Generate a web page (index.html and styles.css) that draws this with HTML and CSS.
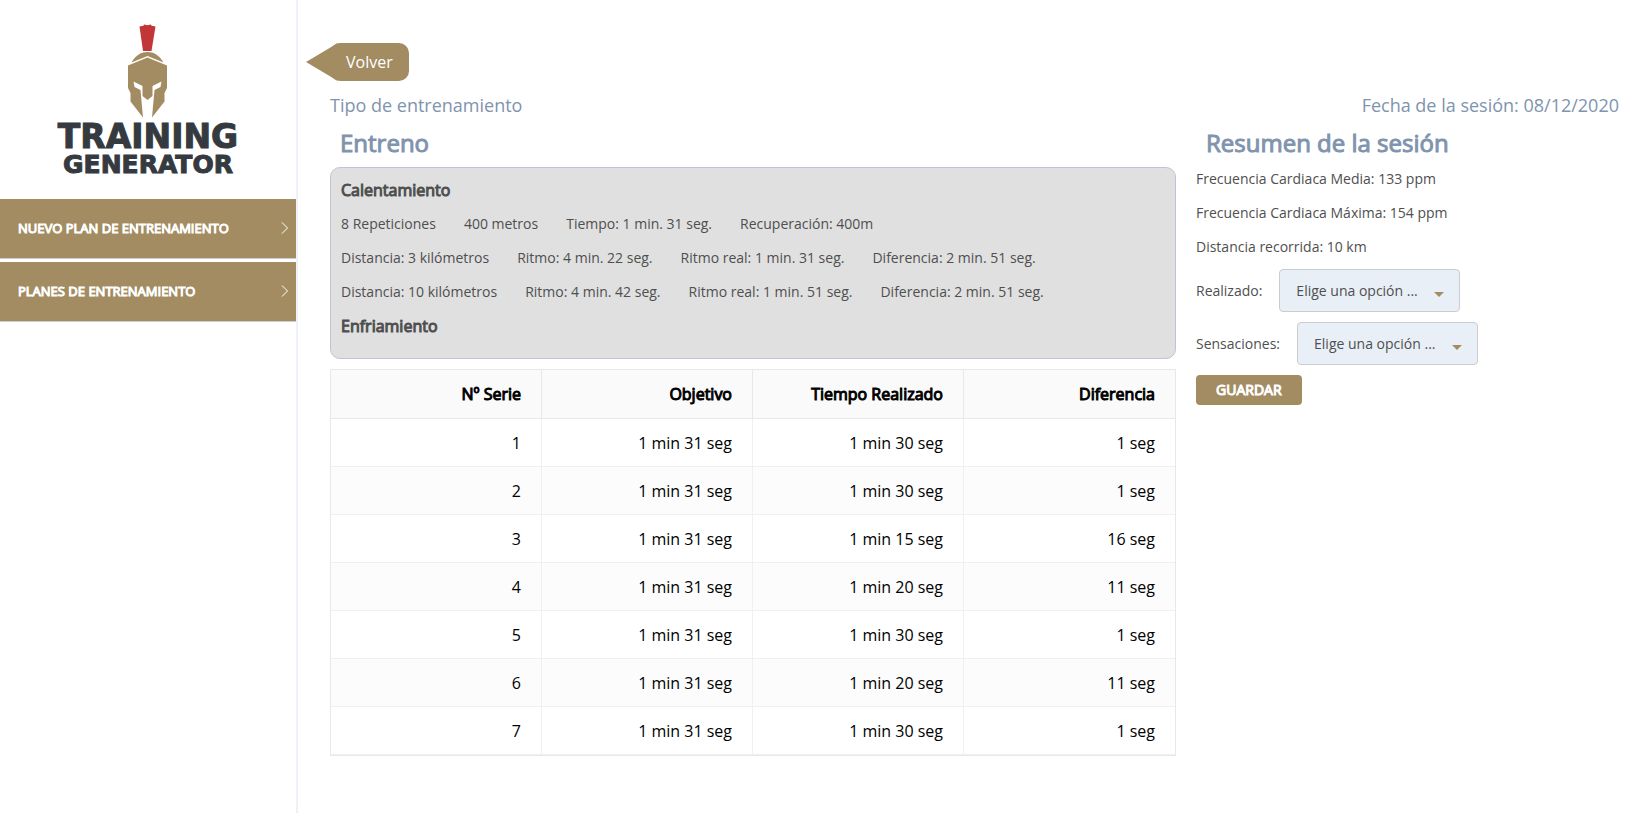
FILE: index.html
```html
<!DOCTYPE html>
<html lang="es">
<head>
<meta charset="utf-8">
<title>Training Generator</title>
<link rel="stylesheet" href="styles.css">
</head>
<body>
<div class="layout">
  <aside class="sidebar">
    <svg class="logo" viewBox="0 0 190 160" role="img" aria-label="Training Generator">
      <path fill="#c23637" d="M87 27 83.500 2.500 87.500 1.800 88 .5 91.500 1.200 95 .5 95.500 1.800 99.500 2.500 95.500 27z"/>
      <path fill="#a38c62" d="M75.500 38.500C79.500 31 85.500 28 91.500 28s12 3 16 10.500L91.500 32z"/>
      <path fill="#a38c62" d="M91.500 33.500 111 41.500V64L108.500 69v8.500L96 93.500 98.500 66 104.500 63 105.500 57.500 96.500 62V72L91.500 76 86.500 72V62L77.500 57.500 78.500 63 84.500 66 87 93.500 74.500 77.500V69L72 64V41.500z"/>
      <text class="logo-top" x="92" y="124" text-anchor="middle">TRAINING</text>
      <text class="logo-bottom" x="92" y="149" text-anchor="middle">GENERATOR</text>
    </svg>
    <nav class="menu">
      <a class="menu-item" href="#">Nuevo plan de entrenamiento
        <svg class="chevron" viewBox="0 0 8 12"><path d="M1 .5 6.500 6 1 11.500"/></svg></a>
      <a class="menu-item" href="#">Planes de entrenamiento
        <svg class="chevron" viewBox="0 0 8 12"><path d="M1 .5 6.500 6 1 11.500"/></svg></a>
    </nav>
  </aside>
  <main class="main">
    <button class="back" type="button">Volver</button>
    <header class="meta"><span>Tipo de entrenamiento</span><span>Fecha de la sesión: 08/12/2020</span></header>
    <div class="columns">
      <section class="training">
        <h2 class="title">Entreno</h2>
        <div class="panel">
          <h3 class="phase">Calentamiento</h3>
          <p class="line"><span>8 Repeticiones</span><span>400 metros</span><span>Tiempo: 1 min. 31 seg.</span><span>Recuperación: 400m</span></p>
          <p class="line"><span>Distancia: 3 kilómetros</span><span>Ritmo: 4 min. 22 seg.</span><span>Ritmo real: 1 min. 31 seg.</span><span>Diferencia: 2 min. 51 seg.</span></p>
          <p class="line"><span>Distancia: 10 kilómetros</span><span>Ritmo: 4 min. 42 seg.</span><span>Ritmo real: 1 min. 51 seg.</span><span>Diferencia: 2 min. 51 seg.</span></p>
          <h3 class="phase">Enfriamiento</h3>
        </div>
        <table class="series">
          <thead><tr><th>Nº Serie</th><th>Objetivo</th><th>Tiempo Realizado</th><th>Diferencia</th></tr></thead>
          <tbody>
            <tr><td>1</td><td>1 min 31 seg</td><td>1 min 30 seg</td><td>1 seg</td></tr>
            <tr><td>2</td><td>1 min 31 seg</td><td>1 min 30 seg</td><td>1 seg</td></tr>
            <tr><td>3</td><td>1 min 31 seg</td><td>1 min 15 seg</td><td>16 seg</td></tr>
            <tr><td>4</td><td>1 min 31 seg</td><td>1 min 20 seg</td><td>11 seg</td></tr>
            <tr><td>5</td><td>1 min 31 seg</td><td>1 min 30 seg</td><td>1 seg</td></tr>
            <tr><td>6</td><td>1 min 31 seg</td><td>1 min 20 seg</td><td>11 seg</td></tr>
            <tr><td>7</td><td>1 min 31 seg</td><td>1 min 30 seg</td><td>1 seg</td></tr>
          </tbody>
        </table>
      </section>
      <section class="summary">
        <h2 class="title">Resumen de la sesión</h2>
        <p class="line">Frecuencia Cardiaca Media: 133 ppm</p>
        <p class="line">Frecuencia Cardiaca Máxima: 154 ppm</p>
        <p class="line">Distancia recorrida: 10 km</p>
        <form class="form">
          <div class="field"><label for="done">Realizado:</label>
            <select class="select" id="done"><option>Elige una opción ...</option></select></div>
          <div class="field"><label for="feel">Sensaciones:</label>
            <select class="select" id="feel"><option>Elige una opción ...</option></select></div>
          <button class="save" type="button">Guardar</button>
        </form>
      </section>
    </div>
  </main>
</div>
</body>
</html>
```
FILE: styles.css
```css
* { box-sizing: border-box; }
body {
  margin: 0;
  background: #fff;
  color: #4f4f4f;
  font: 14px/34px "Open Sans", "Noto Sans", sans-serif;
}
h2, h3, p { margin: 0; font-weight: 400; }
button, select { font: inherit; }
.layout { display: flex; min-height: 100vh; }
.sidebar { flex: 0 0 298px; border-right: 2px solid #f0f0f8; }
.logo { display: block; width: 190px; margin: 24px 0 15px 56px; }
.logo-top, .logo-bottom {
  fill: #343a40;
  stroke: #343a40;
  stroke-width: 1px;
  font-family: "DejaVu Sans", sans-serif;
  font-weight: 700;
}
.logo-top { font-size: 33px; }
.logo-bottom { font-size: 25px; }
.menu { display: grid; gap: 3px; }
.menu-item {
  display: flex;
  align-items: center;
  justify-content: space-between;
  height: 60px;
  padding: 0 7px 2px 18px;
  background: #a38c62;
  border-bottom: 1px solid #ccc;
  color: #fff;
  font-size: 13px;
  text-decoration: none;
  text-transform: uppercase;
  -webkit-text-stroke: 1px currentColor;
}
.chevron { width: 8px; height: 12px; fill: none; stroke: #fff; }
.main { flex: 1; min-width: 0; padding: 43px 19px 24px 32px; }
.back {
  position: relative;
  display: block;
  height: 38px;
  padding: 0 16px;
  border: 0;
  border-radius: 10px;
  background: #a38c62;
  color: #fff;
  font-size: 16px;
  line-height: 38px;
}
.back::before {
  content: "";
  position: absolute;
  top: 0;
  left: -24px;
  width: 32px;
  height: 38px;
  background: #a38c62;
  clip-path: polygon(0 50%, 100% 0, 100% 100%);
}
.meta {
  display: flex;
  justify-content: space-between;
  padding-top: 12px;
  color: #8094ae;
  font-size: 18px;
  line-height: 24px;
}
.columns { display: grid; grid-template-columns: 2fr 1fr; gap: 20px; }
.title {
  padding: 5px 10px 4px;
  color: #8094ae;
  font-size: 24px;
  line-height: 41px;
  -webkit-text-stroke: 1px currentColor;
}
.panel {
  margin-bottom: 10px;
  padding: 5px 10px 15px;
  border: 1px solid #bcc6d2;
  border-radius: 10px;
  background: #e0e0e0;
}
.phase { font-size: 16px; -webkit-text-stroke: 1px currentColor; }
.panel .line { display: flex; flex-wrap: wrap; column-gap: 28px; }
.series {
  width: 100%;
  table-layout: fixed;
  border: 1px solid #e8e8e8;
  border-spacing: 0;
  color: #000;
  font-size: 16px;
  line-height: 24px;
  text-align: right;
}
.series th, .series td { height: 48px; padding: 0 20px 0 8px; border-right: 1px solid #f0f0f0; border-bottom: 1px solid #f0f0f0; }
.series th { height: 49px; background: #fafafa; border-color: #e8e8e8; font-weight: 400; -webkit-text-stroke: 1px currentColor; }
.series th:last-child, .series td:last-child { border-right: 0; }
.series tbody tr:nth-child(even) { background: #fcfcfc; }
.summary .title { padding-bottom: 0; margin-bottom: -1px; }
.form { display: grid; gap: 10px; justify-items: start; padding-top: 5px; }
.field { display: flex; align-items: center; gap: 17px; }
.select {
  width: 181px;
  height: 43px;
  padding: 0 16px;
  border: 1px solid #ccc;
  border-radius: 4px;
  appearance: none;
  background: #e9eff7 url("data:image/svg+xml,%3Csvg xmlns='http://www.w3.org/2000/svg' width='10' height='5'%3E%3Cpath fill='%23a38c62' d='M0 0h10L5 5z'/%3E%3C/svg%3E") no-repeat right 15px top 22px;
  color: #4f4f4f;
}
.save {
  height: 30px;
  padding: 0 20px;
  border: 0;
  border-radius: 4px;
  background: #a38c62;
  color: #fff;
  line-height: 30px;
  text-transform: uppercase;
  -webkit-text-stroke: 1px currentColor;
}
```
